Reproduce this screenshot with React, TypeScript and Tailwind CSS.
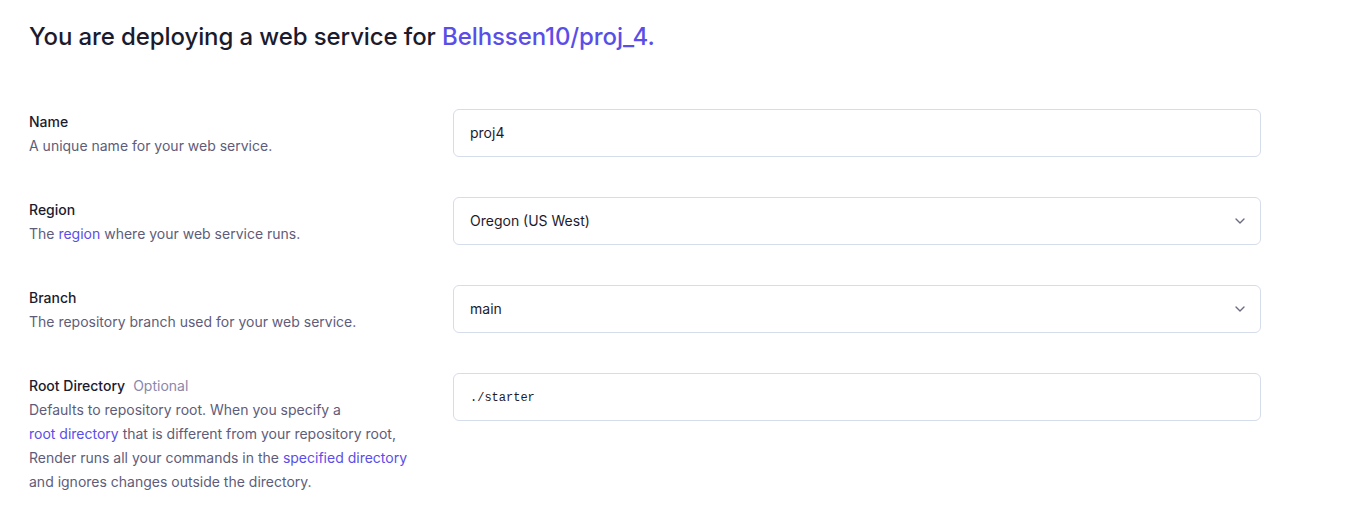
import { ChevronDown } from 'lucide-react'
import type { ReactNode } from 'react'

function Row({ label, optional, children, field }: { label: string; optional?: boolean; children: ReactNode; field: ReactNode }) {
  return (
    <div className="flex">
      <div className="w-[424px] shrink-0 translate-y-px text-sm leading-6">
        <div className="font-medium text-[#1c1b2e]">
          {label}
          {optional && <span className="ml-2 font-normal text-[#8a87ab]">Optional</span>}
        </div>
        <div className="text-[#5e5c7a]">{children}</div>
      </div>
      {field}
    </div>
  )
}

function Field({ value, select, mono }: { value: string; select?: boolean; mono?: boolean }) {
  return (
    <div className="flex h-12 w-[808px] items-center justify-between self-start rounded-md border border-[#d5dcea] bg-white pl-4 pr-3">
      <span
        className={
          mono
            ? "pt-0.5 font-['Liberation_Mono',monospace] text-xs text-[#1c1b2e]"
            : 'text-sm text-[#1c1b2e]'
        }
      >
        {value}
      </span>
      {select && <ChevronDown className="text-[#6b6a80]" width={16} height={16} strokeWidth={2} />}
    </div>
  )
}

const link = 'text-[#5a4ee8]'

export default function App() {
  return (
    <div className="min-h-[507px] bg-white px-[29px] pt-[21px] font-['Inter',sans-serif]">
      <h1 className="text-2xl leading-8 font-medium tracking-[-0.1px] text-[#1c1b2e]">
        You are deploying a web service for <span className={link}>Belhssen10/proj_4.</span>
      </h1>

      <div className="mt-[56px] flex flex-col gap-10">
        <Row label="Name" field={<Field value="proj4" />}>
          A unique name for your web service.
        </Row>
        <Row label="Region" field={<Field value="Oregon (US West)" select />}>
          The <span className={link}>region</span> where your web service runs.
        </Row>
        <Row label="Branch" field={<Field value="main" select />}>
          The repository branch used for your web service.
        </Row>
        <Row label="Root Directory" optional field={<Field value="./starter" mono />}>
          Defaults to repository root. When you specify a
          <br />
          <span className={link}>root directory</span> that is different from your repository root,
          <br />
          Render runs all your commands in the <span className={link}>specified directory</span>
          <br />
          and ignores changes outside the directory.
        </Row>
      </div>
    </div>
  )
}
